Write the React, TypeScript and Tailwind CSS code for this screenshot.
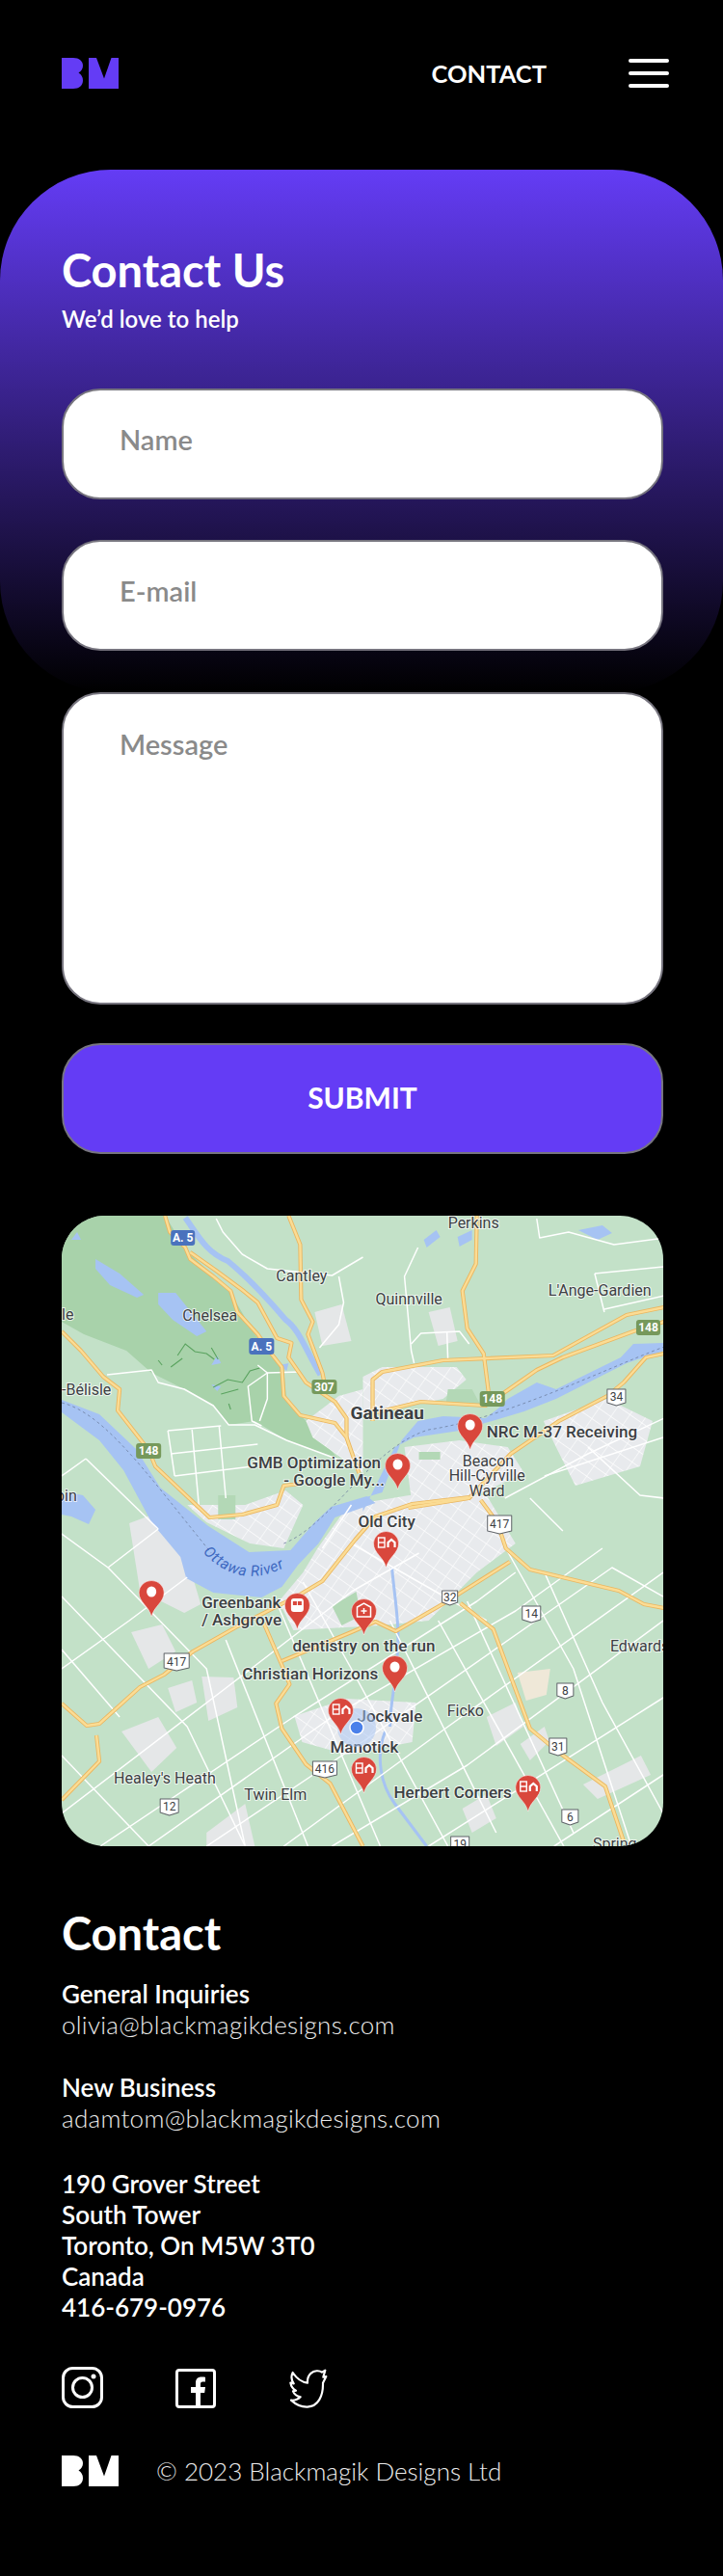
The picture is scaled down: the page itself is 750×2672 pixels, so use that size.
const sans = "font-['Lato','Noto_Sans',sans-serif]";

type Pt = [number, number];

const line = (pts: Pt[]) => "M" + pts.map((p) => p.join(" ")).join("L");

const highways: Pt[][] = [
  [[107, 0], [112, 17], [128, 33], [133, 45], [157, 63], [175, 78], [182, 100], [203, 123], [217, 143], [228, 157], [230, 187], [247, 207], [283, 215], [295, 230], [303, 253], [308, 267]],
  [[133, 38], [160, 57], [187, 77], [203, 90], [223, 127], [238, 132], [235, 147], [253, 173], [283, 193], [295, 210], [295, 230]],
  [[235, 0], [247, 30], [248, 87], [260, 110], [255, 123], [270, 163], [272, 173]],
  [[0, 120], [20, 140], [43, 167], [60, 180], [58, 202], [90, 243], [97, 260], [153, 313], [187, 310], [223, 300], [230, 280], [247, 278]],
  [[322, 213], [322, 170], [332, 162], [395, 150], [509, 145], [585, 103], [624, 95]],
  [[322, 205], [372, 193], [439, 197], [459, 183], [492, 160], [519, 147], [592, 120], [624, 110]],
  [[430, 0], [429, 50], [415, 78], [420, 117], [437, 143], [442, 182]],
  [[359, 303], [422, 293], [465, 247], [515, 213], [565, 187], [582, 173], [605, 147], [624, 143]],
  [[434, 295], [451, 318], [460, 345], [485, 367], [577, 389], [603, 403], [624, 407]],
  [[0, 506], [26, 529], [39, 527], [81, 489], [106, 476], [136, 452], [182, 426], [245, 394], [270, 379], [304, 336], [325, 312], [363, 299], [422, 292]],
  [[209, 422], [228, 466], [236, 486], [222, 506], [228, 532], [253, 569], [278, 589], [312, 654]],
  [[228, 462], [300, 432], [325, 421], [346, 431], [396, 402], [464, 359]],
  [[413, 402], [447, 429], [485, 532], [514, 556], [563, 592], [582, 649]],
  [[0, 606], [39, 566], [36, 539]],
];

const roads: Pt[][] = [
  [[25, 252], [100, 325]], [[25, 252], [0, 270]], [[100, 325], [48, 365], [0, 330]],
  [[48, 365], [150, 470], [190, 654]], [[0, 395], [130, 530], [190, 654]], [[0, 450], [60, 520]], [[0, 560], [90, 654]],
  [[220, 395], [330, 654]], [[250, 380], [300, 470], [400, 654]], [[340, 420], [450, 640]], [[170, 440], [255, 654]],
  [[390, 420], [520, 654]], [[460, 345], [530, 470], [590, 654]], [[500, 370], [560, 505], [623, 620]], [[420, 400], [530, 640]],
  [[0, 620], [170, 490], [300, 390], [370, 350]], [[40, 654], [240, 520], [430, 400], [470, 370]],
  [[150, 654], [320, 540], [520, 400], [570, 365], [623, 395]], [[280, 654], [420, 570], [623, 420]],
  [[380, 654], [623, 500]], [[510, 654], [623, 580]], [[0, 470], [70, 420], [130, 375]], [[90, 654], [280, 520], [470, 410], [560, 345]],
  [[230, 654], [400, 530], [623, 370]],
  [[110, 223], [165, 218]], [[113, 247], [203, 237]], [[117, 270], [197, 260]], [[135, 222], [142, 300]],
  [[163, 218], [170, 293]], [[110, 223], [117, 270]],
  [[47, 165], [93, 160], [100, 173], [127, 180], [157, 197], [173, 217], [200, 217], [233, 233], [287, 253]],
  [[203, 155], [213, 163], [193, 177], [197, 213], [207, 218]], [[213, 163], [213, 190], [205, 213]], [[213, 163], [247, 162]],
  [[160, 3], [167, 17], [187, 40], [213, 55], [280, 62], [312, 43]], [[287, 63], [292, 90], [287, 113], [267, 137]],
  [[369, 33], [355, 63], [362, 140], [365, 153]], [[492, 3], [495, 23], [525, 17], [572, 30], [624, 23]],
  [[552, 60], [624, 53]], [[552, 60], [562, 100]], [[562, 97], [624, 83]],
  [[362, 133], [372, 122], [412, 120], [422, 133]], [[399, 120], [400, 150]],
  [[459, 293], [545, 247], [624, 210]], [[545, 240], [599, 290], [624, 293]], [[485, 293], [519, 327]],
  [[300, 340], [440, 420]], [[300, 300], [270, 345]], [[500, 270], [623, 230]],
];

// town areas carrying the street texture
const town: Pt[][] = [
  [[300, 300], [360, 290], [440, 290], [470, 340], [430, 370], [380, 420], [330, 425], [240, 430], [225, 400], [250, 370], [265, 345], [290, 310]],
  [[312, 167], [332, 157], [409, 157], [419, 170], [395, 190], [345, 200], [312, 207]],
  [[287, 187], [312, 180], [312, 267], [260, 230], [253, 213]],
  [[355, 240], [412, 233], [462, 240], [479, 267], [429, 290], [362, 293]],
  [[499, 213], [565, 190], [612, 213], [599, 260], [532, 280], [512, 240]],
  [[130, 300], [190, 300], [232, 285], [250, 300], [230, 345], [195, 340], [150, 318]],
  [[241, 519], [295, 501], [367, 505], [363, 546], [295, 559], [249, 546]],
];

// plain grey patches
const grey: Pt[][] = [
  [[70, 319], [102, 307], [127, 345], [144, 403], [127, 412], [81, 389]],
  [[72, 432], [104, 424], [118, 452], [90, 470]],
  [[145, 478], [178, 479], [182, 510], [152, 524]],
  [[62, 535], [100, 520], [119, 552], [93, 577]],
  [[110, 490], [135, 482], [140, 505], [118, 515]],
  [[262, 100], [290, 92], [300, 130], [270, 135]],
  [[440, 520], [470, 505], [478, 530], [450, 550]],
  [[475, 548], [500, 530], [505, 545], [485, 565]],
  [[540, 590], [600, 560], [610, 580], [555, 605]],
  [[415, 615], [440, 600], [450, 625], [425, 640]],
  [[150, 640], [190, 610], [200, 654], [150, 654]],
  [[380, 100], [402, 95], [410, 130], [390, 135]],
];

const pins: { x: number; y: number; kind: "dot" | "home" | "train" | "clinic" }[] = [
  { x: 423, y: 243, kind: "dot" },
  { x: 348, y: 284, kind: "dot" },
  { x: 336, y: 365, kind: "home" },
  { x: 93, y: 416, kind: "dot" },
  { x: 244, y: 429, kind: "train" },
  { x: 313, y: 435, kind: "clinic" },
  { x: 345, y: 494, kind: "dot" },
  { x: 289, y: 538, kind: "home" },
  { x: 313, y: 599, kind: "home" },
  { x: 483, y: 618, kind: "home" },
];

const labels: { t: string; x: number; y: number; bold?: boolean; mid?: boolean; size?: number }[] = [
  { t: "Perkins", x: 400, y: 13 },
  { t: "Cantley", x: 222, y: 68 },
  { t: "Quinnville", x: 325, y: 92 },
  { t: "L'Ange-Gardien", x: 504, y: 83 },
  { t: "Chelsea", x: 125, y: 109 },
  { t: "le", x: 0, y: 108 },
  { t: "-Bélisle", x: 0, y: 186 },
  { t: "bin", x: -6, y: 296 },
  { t: "Gatineau", x: 299, y: 211, bold: true, size: 19 },
  { t: "NRC M-37 Receiving", x: 440, y: 230, mid: true },
  { t: "GMB Optimization", x: 192, y: 262, mid: true },
  { t: "- Google My...", x: 230, y: 280, mid: true },
  { t: "Beacon", x: 415, y: 260 },
  { t: "Hill-Cyrville", x: 401, y: 275 },
  { t: "Ward", x: 422, y: 291 },
  { t: "Old City", x: 307, y: 323, mid: true },
  { t: "Greenbank", x: 145, y: 407, mid: true },
  { t: "/ Ashgrove", x: 145, y: 425, mid: true },
  { t: "dentistry on the run", x: 239, y: 452, mid: true },
  { t: "Edwards", x: 568, y: 452 },
  { t: "Christian Horizons", x: 187, y: 481, mid: true },
  { t: "Ficko", x: 399, y: 519 },
  { t: "Jockvale", x: 306, y: 525, mid: true },
  { t: "Manotick", x: 278, y: 557, mid: true },
  { t: "Healey's Heath", x: 54, y: 589 },
  { t: "Herbert Corners", x: 344, y: 604, mid: true },
  { t: "Twin Elm", x: 189, y: 606 },
  { t: "Spring", x: 550, y: 657 },
];

const shields: { t: string; x: number; y: number; w: number; h: number }[] = [
  { t: "34", x: 565, y: 180, w: 19, h: 17 },
  { t: "417", x: 441, y: 311, w: 25, h: 19 },
  { t: "417", x: 106, y: 454, w: 26, h: 18 },
  { t: "32", x: 394, y: 389, w: 16, h: 15 },
  { t: "14", x: 477, y: 405, w: 19, h: 17 },
  { t: "8", x: 513, y: 485, w: 17, h: 16 },
  { t: "31", x: 505, y: 542, w: 18, h: 18 },
  { t: "416", x: 260, y: 566, w: 25, h: 17 },
  { t: "12", x: 102, y: 605, w: 19, h: 17 },
  { t: "6", x: 518, y: 616, w: 17, h: 16 },
  { t: "19", x: 403, y: 644, w: 19, h: 16 },
];

const signs: { t: string; x: number; y: number; w: number; h: number; fill: string }[] = [
  { t: "A. 5", x: 113, y: 15, w: 25, h: 16, fill: "#4a72bd" },
  { t: "A. 5", x: 194, y: 127, w: 26, h: 17, fill: "#4a72bd" },
  { t: "148", x: 77, y: 236, w: 26, h: 16, fill: "#76995b" },
  { t: "307", x: 259, y: 170, w: 26, h: 15, fill: "#76995b" },
  { t: "148", x: 433, y: 182, w: 26, h: 16, fill: "#76995b" },
  { t: "148", x: 595, y: 108, w: 25, h: 16, fill: "#76995b" },
];

function PinIcon({ kind }: { kind: string }) {
  if (kind === "dot") return <ellipse cx="0" cy="-26" rx="5" ry="5.5" fill="#fff" />;
  if (kind === "home")
    return (
      <g fill="none" stroke="#fff" strokeWidth="1.4">
        <rect x="-8" y="-31" width="6.5" height="10" />
        <path d="M-8 -26H-1.5" />
        <path d="M2 -21V-26L5.5 -29L9 -26V-21" strokeWidth="2.2" />
      </g>
    );
  if (kind === "train")
    return (
      <g>
        <rect x="-6.5" y="-32" width="13" height="14" rx="3" fill="#fff" />
        <rect x="-4.5" y="-29" width="4" height="4" fill="#d9473c" />
        <rect x="0.5" y="-29" width="4" height="4" fill="#d9473c" />
      </g>
    );
  return (
    <g fill="none" stroke="#fff" strokeWidth="1.5">
      <path d="M-7 -19V-29L0 -33L7 -29V-19Z" />
      <path d="M-3 -25H3M0 -28V-22" />
    </g>
  );
}

function MapPicture() {
  return (
    <svg viewBox="0 0 623 654" preserveAspectRatio="none" className="block h-full w-full" style={{ fontFamily: "Roboto, sans-serif" }}>
      <defs>
        <pattern id="streets" width="15" height="13" patternUnits="userSpaceOnUse" patternTransform="rotate(35)">
          <rect width="15" height="13" fill="#e8eaed" />
          <path d="M0 0H15M0 0V13" stroke="#fff" strokeWidth="1.2" />
        </pattern>
      </defs>
      <rect width="623" height="654" fill="#c3e1c8" />
      {/* park */}
      <path
        d={line([[107, 0], [130, 37], [173, 77], [200, 123], [230, 160], [233, 193], [253, 213], [287, 253], [233, 233], [200, 213], [173, 217], [157, 197], [127, 180], [93, 163], [67, 140], [23, 123], [0, 110], [0, 33], [13, 10], [25, 0]]) + "Z"}
        fill="#a8d2aa"
      />
      {grey.map((g, i) => (
        <path key={i} d={line(g) + "Z"} fill="#e5e7e8" />
      ))}
      {town.map((g, i) => (
        <path key={i} d={line(g) + "Z"} fill="url(#streets)" />
      ))}
      <path d="M472 474L506 470L502 497L481 503Z" fill="#efe8d8" />
      {/* green spots in town */}
      <path d="M162 290h18v25h-18zM400 180h25l8 15h-35zM280 405l25-15 5 25-20 10zM370 245h22v8h-22z" fill="#b3d8b6" />
      {/* water */}
      <g fill="#a6c3f3">
        <path d={line([[0, 191], [39, 206], [77, 242], [102, 282], [152, 322], [194, 349], [237, 347], [262, 318], [279, 302], [316, 291], [325, 298], [283, 313], [266, 340], [245, 362], [228, 385], [207, 396], [157, 391], [129, 376], [123, 354], [93, 318], [64, 264], [39, 233], [0, 204]]) + "Z"} />
        <path d={line([[312, 307], [345, 240], [365, 230], [412, 223], [479, 203], [512, 190], [585, 153], [624, 140], [624, 132], [592, 133], [579, 147], [512, 180], [492, 173], [462, 190], [452, 200], [439, 210], [395, 208], [369, 213], [352, 233], [332, 287], [312, 293]]) + "Z"} />
        <path d="M100 80L118 80L130 95L150 120L140 125L115 108L100 92Z" />
        <path d="M7 287L22 290L35 305L28 320L10 312L0 310V292Z" />
        <path d="M35 45L60 60L85 82L78 85L50 72L35 55Z" />
        <path d="M410 22L425 15L425 25L412 32ZM535 15L560 10L570 18L555 25ZM375 25L388 15L392 22L378 33Z" />
        <path d="M155 175l10 2-4 5zM225 155l10-2-2 8zM155 155l6-10 4 8zM10 25l6-8 4 8z" />
      </g>
      <path d="M128 2C142 22 150 38 172 47C188 60 208 80 232 108C246 118 252 138 268 165" fill="none" stroke="#a6c3f3" strokeWidth="6" />
      <path d="M335 535C325 560 330 590 345 610L378 654" fill="none" stroke="#a6c3f3" strokeWidth="3" />
      <path d="M342 365C345 400 352 430 346 470C345 490 340 510 340 530" fill="none" stroke="#a6c3f3" strokeWidth="3" />
      <path d="M0 194C45 205 90 270 155 350" fill="none" stroke="#6d7fa0" strokeWidth="0.8" strokeDasharray="3 3" />
      <path d="M230 340C280 320 320 240 380 222C460 210 560 160 624 136" fill="none" stroke="#6d7fa0" strokeWidth="0.8" strokeDasharray="3 3" />
      {/* trail scribbles */}
      <path d="M120 145l8-12 10 8 12 2 8 6M113 157l12-9M155 137l7 12M157 178l15-8 15 3 8-12 10-3M165 185l18-5M173 195l2 6M100 150l4 5" fill="none" stroke="#5aa35f" strokeWidth="1.1" />
      {/* roads */}
      <g fill="none" stroke="#fff" strokeWidth="1.5" strokeLinejoin="round">
        {roads.map((r, i) => (
          <path key={i} d={line(r)} />
        ))}
      </g>
      <g fill="none" stroke="#eab660" strokeWidth="4.2" strokeLinejoin="round">
        {highways.map((r, i) => (
          <path key={i} d={line(r)} />
        ))}
      </g>
      <g fill="none" stroke="#fbdc94" strokeWidth="2.4" strokeLinejoin="round">
        {highways.map((r, i) => (
          <path key={i} d={line(r)} />
        ))}
      </g>
      {/* shields */}
      {shields.map((s, i) => (
        <g key={i}>
          <path
            d={`M${s.x} ${s.y}h${s.w}v${s.h - 3}l-${s.w / 2} 3l-${s.w / 2} -3z`}
            fill="#fff"
            stroke="#5f6368"
            strokeWidth="1"
            strokeLinejoin="round"
          />
          <text x={s.x + s.w / 2} y={s.y + s.h / 2 + 4} textAnchor="middle" fontSize="12" fill="#3c4043">
            {s.t}
          </text>
        </g>
      ))}
      {signs.map((s, i) => (
        <g key={i}>
          <rect x={s.x} y={s.y} width={s.w} height={s.h} rx="3" fill={s.fill} />
          <text x={s.x + s.w / 2} y={s.y + s.h / 2 + 4.5} textAnchor="middle" fontSize="12" fontWeight="700" fill="#fff">
            {s.t}
          </text>
        </g>
      ))}
      {/* labels */}
      <g fill="#3c4043" stroke="#fff" strokeWidth="2" strokeOpacity="0.7" style={{ paintOrder: "stroke" }}>
        {labels.map((l, i) => (
          <text key={i} x={l.x} y={l.y} fontSize={l.size ?? (l.mid ? 17 : 16)} fontWeight={l.bold ? 700 : l.mid ? 500 : 400}>
            {l.t}
          </text>
        ))}
      </g>
      <path id="river-label" d="M146 349Q190 395 245 356" fill="none" />
      <text fontSize="15.5" fill="#3d68c0" fontStyle="italic" letterSpacing="0.8">
        <textPath href="#river-label">Ottawa River</textPath>
      </text>
      {/* my location */}
      <circle cx="305.5" cy="531" r="20" fill="#a6c3f3" opacity="0.5" />
      <circle cx="305.5" cy="531" r="7" fill="#4a80ea" stroke="#fff" strokeWidth="1.5" />
      {/* pins */}
      {pins.map((p, i) => (
        <g key={i} transform={`translate(${p.x} ${p.y})`}>
          <path d="M0 0C-2.5 -11 -13 -15 -13 -25A13 12.5 0 1 1 13 -25C13 -15 2.5 -11 0 0Z" fill="#d9473c" stroke="#fff" strokeOpacity="0.6" strokeWidth="0.8" />
          <PinIcon kind={p.kind} />
        </g>
      ))}
    </svg>
  );
}

function Logo({ className }: { className: string }) {
  return (
    <svg viewBox="0 0 59 32" className={className} fill="currentColor">
      <path d="M0 0H12C18 0 22 3.5 22 8C22 11 20.5 13.5 17.5 15.5C20.5 17.5 22 20 22 23.5C22 28.5 18 32 12 32H0Z" />
      <path d="M28 0H36L44 21.5L51.5 0H59V32H28Z" />
    </svg>
  );
}

function Field({ placeholder }: { placeholder: string }) {
  return (
    <input
      placeholder={placeholder}
      className="block h-[115px] w-full rounded-[40px] border-2 border-[#77757f] bg-white pb-2.5 pl-[58px] text-[29px] font-semibold text-black outline-none placeholder:text-[#8a8a8a]"
    />
  );
}

export default function App() {
  return (
    <div className={`min-h-[2672px] bg-black text-white ${sans}`}>
      <header className="flex items-center justify-between pt-[60px] pl-16 pr-14">
        <Logo className="h-8 w-[59px] text-[#643cf5]" />
        <div className="flex items-center gap-[85px]">
          <span className="text-[25.5px] leading-8 font-bold">CONTACT</span>
          <div className="flex h-8 w-[42px] flex-col justify-between py-[1px]">
            <span className="block h-1 rounded-full bg-white" />
            <span className="block h-1 rounded-full bg-white" />
            <span className="block h-1 rounded-full bg-white" />
          </div>
        </div>
      </header>

      <section className="mt-[84px] h-[542px] rounded-[115px] bg-[linear-gradient(180deg,#643cf5,#000_100%)] pt-[80px] pr-[62px] pl-16">
        <h1 className="text-[47px] leading-[48px] font-bold">Contact Us</h1>
        <p className="mt-[11px] text-[24px] leading-8 font-semibold">We’d love to help</p>
        <div className="mt-14 flex flex-col gap-[42px]">
          <Field placeholder="Name" />
          <Field placeholder="E-mail" />
        </div>
      </section>

      <form className="flex flex-col pr-[62px] pl-16" onSubmit={(e) => e.preventDefault()}>
        <textarea
          placeholder="Message"
          className="block h-[324px] w-full resize-none rounded-[40px] border-2 border-[#77757f] bg-white pt-[36px] pl-[58px] text-[29px] leading-8 font-semibold text-black outline-none placeholder:text-[#8a8a8a]"
        />
        <button className="mt-10 h-[115px] rounded-[40px] border-2 border-[#77757f] bg-[#643cf5] pb-[3px] text-[30px] font-bold text-white">
          SUBMIT
        </button>
      </form>

      <div className="mt-16 mr-[62px] ml-16 h-[654px] overflow-hidden rounded-[45px]">
        <MapPicture />
      </div>

      <footer className="pt-[66px] pr-[62px] pl-16">
        <h2 className="text-[47px] leading-[48px] font-bold">Contact</h2>
        <div className="mt-[23px] text-[26px] leading-8">
          <p className="font-semibold">General Inquiries</p>
          <p className="font-light tracking-[0.3px] text-[#ececec]">olivia@blackmagikdesigns.com</p>
          <p className="mt-[33px] font-semibold">New Business</p>
          <p className="font-light tracking-[0.3px] text-[#ececec]">adamtom@blackmagikdesigns.com</p>
          <p className="mt-9 font-semibold">190 Grover Street</p>
          <p className="font-semibold">South Tower</p>
          <p className="font-semibold">Toronto, On M5W 3T0</p>
          <p className="font-semibold">Canada</p>
          <p className="font-semibold">416-679-0976</p>
        </div>

        <div className="mt-[46px] flex items-end">
          <svg viewBox="0 0 43 43" className="h-[43px] w-[43px]" fill="none" stroke="#fff" strokeWidth="3">
            <rect x="1.5" y="1.5" width="40" height="40" rx="10" />
            <circle cx="21.5" cy="21.5" r="10" />
            <circle cx="33" cy="10" r="2.5" fill="#fff" stroke="none" />
          </svg>
          <svg viewBox="0 0 42 41" className="ml-[75px] h-[41px] w-[42px]" fill="none">
            <rect x="1.5" y="1.5" width="39" height="38" rx="2.5" stroke="#fff" strokeWidth="3" />
            <path d="M21 40V25H16V19H21V14.5C21 10.5 23.5 8.5 27 8.5C28.7 8.5 30.5 8.7 31 8.8V13.5H28.3C26.5 13.5 26 14.5 26 15.8V19H31L30.2 25H26V40Z" fill="#fff" />
          </svg>
          <svg viewBox="35 36 120 123" className="ml-[76px] h-[41px] w-[40px]" fill="none" stroke="#fff" strokeWidth="6.5" strokeLinejoin="round">
            <path d="M147 41L137 47C128 40 112 42 103 50C94 58 91 68 92 80C75 78 58 66 46 48C40 60 42 72 49 82L39 80C41 92 48 100 56 104L47 106C51 116 60 122 70 124C62 132 52 135 41 134C54 146 72 156 92 155C125 153 141 122 140 80L150 60L141 62Z" />
          </svg>
        </div>

        <div className="mt-[49px] flex items-center">
          <Logo className="h-8 w-[59px] text-white" />
          <p className="ml-[39px] text-[26px] leading-8 font-light text-[#ececec]">© 2023 Blackmagik Designs Ltd</p>
        </div>
      </footer>
    </div>
  );
}
